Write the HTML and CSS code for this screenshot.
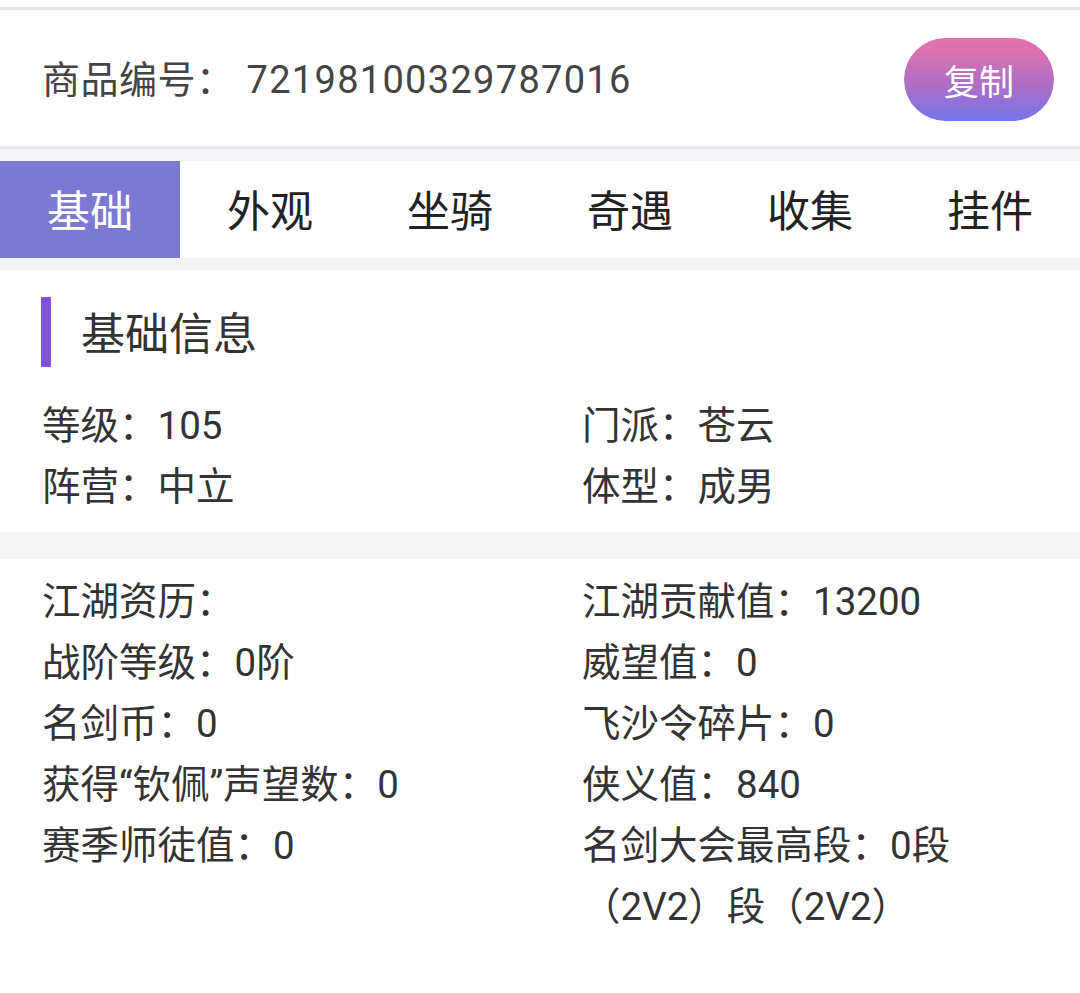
FILE: index.html
```html
<!DOCTYPE html>
<html lang="zh-CN">
<head>
<meta charset="utf-8">
<link rel="stylesheet" href="styles.css">
</head>
<body>
<div class="page">
  <div class="top-gap"></div>
  <header class="goods">
    <div class="goods-no">商品编号：<span class="num">7219810032978​7016</span></div>
    <button class="copy-btn">复制</button>
  </header>
  <nav class="tabs">
    <div class="tab active">基础</div>
    <div class="tab">外观</div>
    <div class="tab">坐骑</div>
    <div class="tab">奇遇</div>
    <div class="tab">收集</div>
    <div class="tab">挂件</div>
  </nav>
  <section class="card basic">
    <h2 class="sec-title">基础信息</h2>
    <div class="grid">
      <div class="cell">等级：105</div>
      <div class="cell">门派：苍云</div>
      <div class="cell">阵营：中立</div>
      <div class="cell">体型：成男</div>
    </div>
  </section>
  <section class="card more">
    <div class="grid">
      <div class="cell">江湖资历：</div>
      <div class="cell">江湖贡献值：13200</div>
      <div class="cell">战阶等级：0阶</div>
      <div class="cell">威望值：0</div>
      <div class="cell">名剑币：0</div>
      <div class="cell">飞沙令碎片：0</div>
      <div class="cell">获得“钦佩”声望数：0</div>
      <div class="cell">侠义值：840</div>
      <div class="cell">赛季师徒值：0</div>
      <div class="cell">名剑大会最高段：0段（2V2）段（2V2）</div>
    </div>
  </section>
</div>
</body>
</html>
```

FILE: styles.css
```css
* { box-sizing: border-box; }
html, body { margin: 0; padding: 0; }
body {
  background: #ffffff;
  font-family: "Roboto", "Noto Sans CJK SC", sans-serif;
  color: #333;
}
.page {
  width: 1080px;
  min-height: 993px;
  background: #f4f4f6;
}
.top-gap {
  height: 10px;
  background: #fff;
  border-bottom: 3px solid #e5e6ea;
}
.goods {
  height: 139px;
  display: flex;
  align-items: center;
  justify-content: space-between;
  padding: 0 26px 0 42px;
  border-bottom: 3px solid #e5e6ea;
  background: #fff;
}
.goods-no {
  font-size: 38px;
  color: #444;
  letter-spacing: 0.5px;
  margin-bottom: 4px;
}
.goods-no .num {
  margin-left: 12px;
  letter-spacing: 1.3px;
}
.copy-btn {
  width: 150px;
  height: 83px;
  border: none;
  border-radius: 42px;
  background: linear-gradient(180deg, #e872a6 0%, #b06fc4 55%, #7474ec 100%);
  color: #fff;
  font-family: "Noto Sans CJK SC", sans-serif;
  font-size: 35px;
  padding: 0;
  margin-top: 2px;
}
.tabs {
  margin-top: 12px;
  display: grid;
  grid-template-columns: repeat(6, 1fr);
  height: 97px;
  background: #fff;
}
.tab {
  display: flex;
  align-items: center;
  justify-content: center;
  padding-bottom: 3px;
  font-size: 43px;
  color: #222;
}
.tab.active { background: #7d78d2; color: #fff; }
.card { background: #fff; }
.basic {
  margin-top: 12px;
  padding: 27px 0 15px;
}
.sec-title {
  margin: 0 0 28px 41px;
  border-left: 10px solid #7e52dc;
  padding-left: 30px;
  height: 70px;
  line-height: 68px;
  font-size: 44px;
  font-weight: normal;
  color: #333;
  font-family: "Noto Sans CJK SC", sans-serif;
}
.grid {
  display: grid;
  grid-template-columns: 540px 540px;
}
.cell {
  padding: 0 84px 0 42px;
  font-size: 38.5px;
  line-height: 61px;
  color: #333;
}
.more {
  margin-top: 27px;
  padding: 12px 0 60px;
}
```
